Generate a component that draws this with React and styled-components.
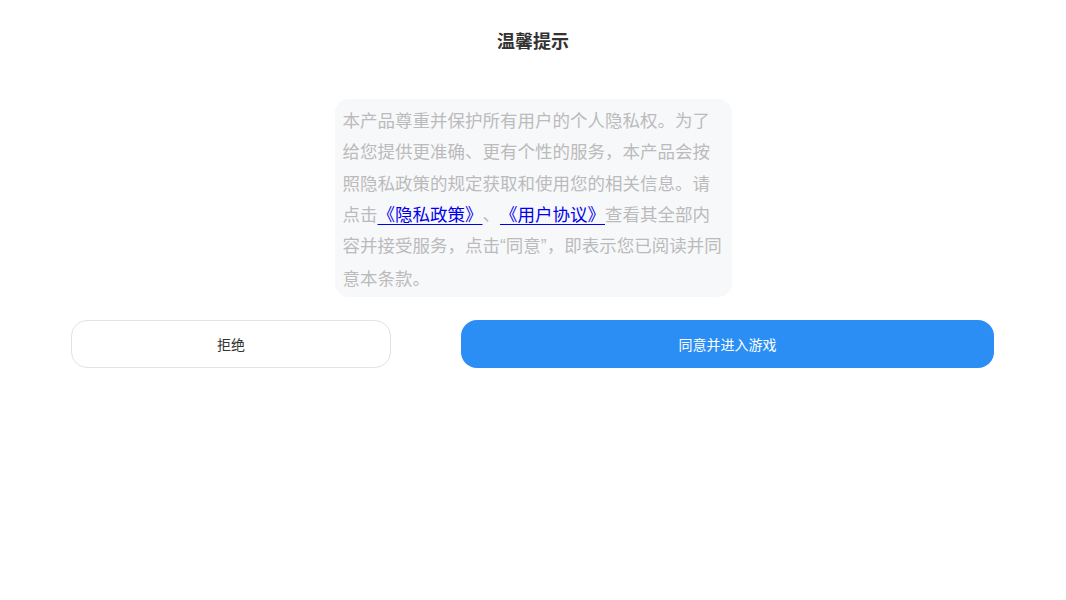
import styled, { createGlobalStyle } from 'styled-components';

const GlobalStyle = createGlobalStyle`
  html, body {
    margin: 0;
    padding: 0;
    background: #ffffff;
    font-family: "Noto Sans CJK SC", "Noto Sans", sans-serif;
  }
`;

const Page = styled.div`
  width: 1066px;
  height: 600px;
  display: flex;
  flex-direction: column;
  align-items: center;
  box-sizing: border-box;
  padding-top: 28px;
`;

const Title = styled.h1`
  margin: 0;
  font-size: 18px;
  line-height: 24px;
  font-weight: 700;
  color: #333333;
`;

const Notice = styled.div`
  margin-top: 47px;
  width: 397px;
  height: 198px;
  box-sizing: border-box;
  padding: 5px 7px 5px 8px;
  background: #f7f8fa;
  border-radius: 14px;
  font-size: 17.5px;
  line-height: 31.3px;
  color: #bbbbbb;
  text-align: left;
  text-spacing-trim: space-all;
`;

const Link = styled.a`
  color: #0000ee;
  text-decoration: underline;
  text-underline-offset: 3px;
`;

const Quote = styled.span`
  font-family: "Liberation Sans", sans-serif;
`;

const Actions = styled.div`
  margin-top: 23px;
  width: 100%;
  box-sizing: border-box;
  padding: 0 72px 0 71px;
  display: flex;
  justify-content: space-between;
`;

const Button = styled.button`
  width: ${p => (p.$primary ? '533px' : '320px')};
  height: 48px;
  box-sizing: border-box;
  border-radius: 16px;
  border: ${p => (p.$primary ? 'none' : '1px solid #e3e3e3')};
  background: ${p => (p.$primary ? '#2a8ef5' : '#ffffff')};
  color: ${p => (p.$primary ? '#ffffff' : '#333333')};
  font-family: inherit;
  font-size: 14px;
  cursor: pointer;
`;

const App = () => (
  <>
    <GlobalStyle />
    <Page>
      <Title>温馨提示</Title>
      <Notice>
        本产品尊重并保护所有用户的个人隐私权。为了给您提供更准确、更有个性的服务，本产品会按照隐私政策的规定获取和使用您的相关信息。请点击
        <Link href="#">《隐私政策》</Link>、<Link href="#">《用户协议》</Link>
        查看其全部内容并接受服务，点击<Quote>“</Quote>同意<Quote>”</Quote>，即表示您已阅读并同意本条款。
      </Notice>
      <Actions>
        <Button>拒绝</Button>
        <Button $primary>同意并进入游戏</Button>
      </Actions>
    </Page>
  </>
);

export default App;
